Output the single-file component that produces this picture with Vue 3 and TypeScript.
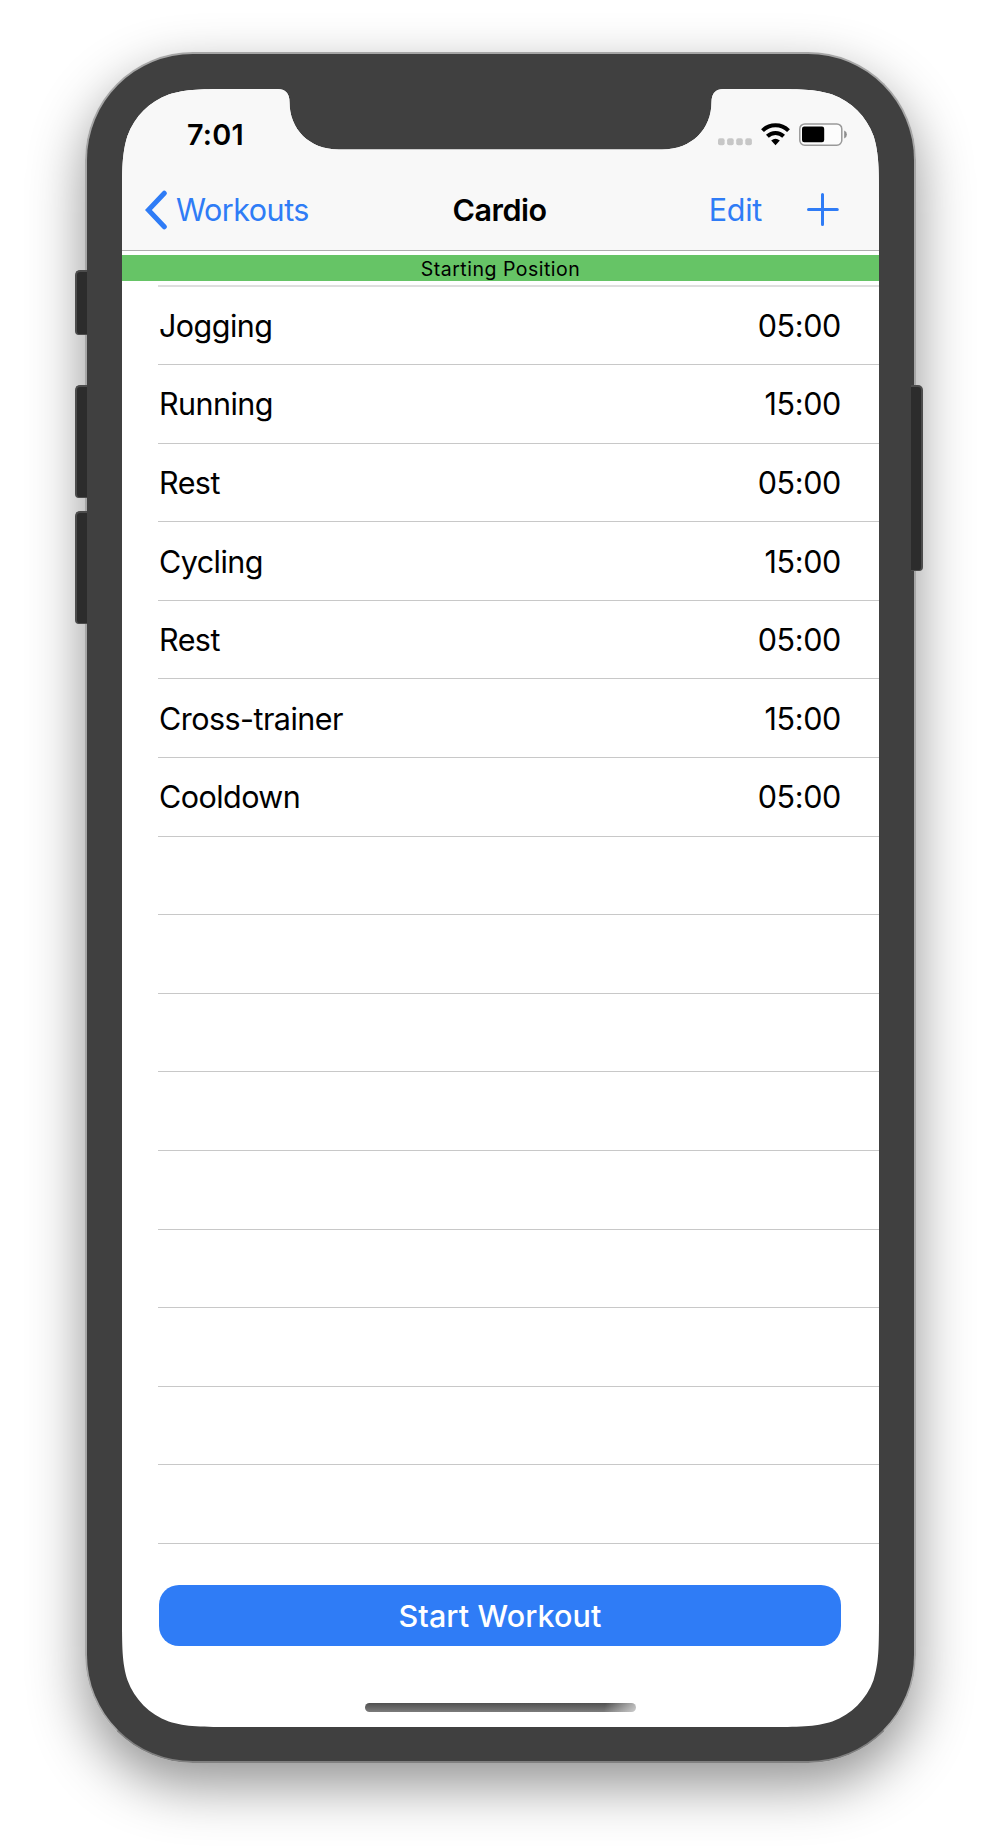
<script setup lang="ts">
interface Exercise {
  name: string
  duration: string
}

const exercises: Exercise[] = [
  { name: 'Jogging', duration: '05:00' },
  { name: 'Running', duration: '15:00' },
  { name: 'Rest', duration: '05:00' },
  { name: 'Cycling', duration: '15:00' },
  { name: 'Rest', duration: '05:00' },
  { name: 'Cross-trainer', duration: '15:00' },
  { name: 'Cooldown', duration: '05:00' },
]

const emptyRows = 9
</script>

<template>
  <main class="stage">
    <div class="phone">
      <i class="key key-mute"></i>
      <i class="key key-up"></i>
      <i class="key key-down"></i>
      <i class="key key-power"></i>
      <div class="body">
        <section class="screen">
          <header class="top">
            <div class="status">
              <span class="clock">7:01</span>
              <div class="indicators">
                <svg class="dots" width="34" height="8" viewBox="0 0 34 8" fill="#c7c7c7">
                  <rect x="0" y="0.3" width="6.6" height="7" rx="2" />
                  <rect x="9.1" y="0.3" width="6.6" height="7" rx="2" />
                  <rect x="18.2" y="0.3" width="6.6" height="7" rx="2" />
                  <rect x="27.3" y="0.3" width="6.6" height="7" rx="2" />
                </svg>
                <svg class="wifi" width="29" height="23" viewBox="0 0 29 23" fill="none" stroke="#000" stroke-width="4">
                  <path d="M1.5 7.6a18.4 18.4 0 0 1 26 0" />
                  <path d="M6.4 13.3a11.6 11.6 0 0 1 16.2 0" />
                  <path d="M14.5 22.2 L10.2 17.6 Q14.5 13.9 18.8 17.6 Z" fill="#000" stroke="none" />
                </svg>
                <svg class="battery" width="49" height="24" viewBox="0 0 49 24">
                  <rect x="0.8" y="0.9" width="42" height="21.3" rx="5" fill="#fcfcfc" stroke="#999" stroke-width="1.5" />
                  <rect x="3" y="3.6" width="22.2" height="15.6" rx="2.2" fill="#000" />
                  <path d="M45.2 7.6q2.7 1 2.7 4t-2.7 4z" fill="#8e8e8e" />
                </svg>
              </div>
            </div>
            <nav class="nav">
              <a class="back">
                <svg width="23" height="40" viewBox="0 0 23 40" fill="none" stroke="#2f7cf6" stroke-width="5" stroke-linecap="round" stroke-linejoin="miter">
                  <path d="M19.3 3.2 L3.4 20 L19.3 36.8" />
                </svg>
                <span>Workouts</span>
              </a>
              <h1>Cardio</h1>
              <div class="actions">
                <a class="edit">Edit</a>
                <svg width="32" height="33" viewBox="0 0 32 33" stroke="#2f7cf6" stroke-width="3" stroke-linecap="round">
                  <path d="M1.5 16.5H30.3M15.5 1.5V31.5" />
                </svg>
              </div>
            </nav>
          </header>
          <div class="banner">Starting Position</div>
          <ul class="list">
            <li v-for="(item, i) in exercises" :key="i">
              <span class="name">{{ item.name }}</span>
              <span class="time">{{ item.duration }}</span>
            </li>
            <li v-for="n in emptyRows" :key="'empty' + n"></li>
          </ul>
          <button class="start" type="button">Start Workout</button>
          <div class="home"></div>
        </section>
      </div>
    </div>
  </main>
</template>

<style>
body {
  background: #fff;
}
</style>

<style scoped>
.stage {
  box-sizing: border-box;
  width: 1000px;
  height: 1848px;
  padding: 52px 0 0 85px;
  overflow: hidden;
  background: #fff;
  font-family: Inter, 'Liberation Sans', sans-serif;
  color: #000;
}

.phone {
  position: relative;
  width: 831px;
  height: 1711px;
  border-radius: 108px;
  box-shadow: 0 22px 55px rgba(0, 0, 0, 0.43);
}

.body {
  box-sizing: border-box;
  height: 100%;
  padding: 35px;
  border: 2px solid #a6a6a6;
  border-bottom-color: #808080;
  border-radius: 108px;
  background: #404040;
}

/* Side keys stick out past the edge of the case. */
.key {
  position: absolute;
  z-index: 1;
  box-sizing: border-box;
  width: 12px;
  background: #2c2c2c;
  border: 2px solid #4c4c4c;
  border-width: 2px 0 1px 2px;
  border-radius: 5px 0 0 4px;
  left: -10px;
}
.key-mute {
  top: 218px;
  height: 65px;
}
.key-up {
  top: 333px;
  height: 113px;
}
.key-down {
  top: 459px;
  height: 113px;
}
.key-power {
  top: 333px;
  left: 826px;
  width: 11.5px;
  height: 186px;
  border-width: 2px 2.5px 1px 0;
  border-radius: 0 5px 4px 0;
}

.screen {
  display: flex;
  flex-direction: column;
  width: 757px;
  height: 1638px;
  background: #fff;
  clip-path: path('M0 113 C0 80.5 0 64.3 5.5 46.7 C12.5 27.6 27.6 12.5 46.7 5.5 C64.3 0 80.5 0 113 0 H155 Q167.5 0 167.5 13 C167.5 40 187 60.5 217 60.5 H540 C570 60.5 589.5 40 589.5 13 Q589.5 0 602 0 H644 C676.5 0 692.7 0 710.3 5.5 C729.4 12.5 744.5 27.6 751.5 46.7 C757 64.3 757 80.5 757 113 V1525 C757 1557.5 757 1573.7 751.5 1591.3 C744.5 1610.4 729.4 1625.5 710.3 1632.5 C692.7 1638 676.5 1638 644 1638 H113 C80.5 1638 64.3 1638 46.7 1632.5 C27.6 1625.5 12.5 1610.4 5.5 1591.3 C0 1573.7 0 1557.5 0 1525 Z');
}

.top {
  box-sizing: border-box;
  flex: none;
  height: 162px;
  border-bottom: 1px solid #adadad;
  background: #f8f8f8;
}

.status {
  display: flex;
  justify-content: space-between;
  height: 80px;
  padding: 0 31px 0 65px;
}
.clock {
  padding-top: 29px;
  font-size: 28.8px;
  font-weight: 600;
  line-height: 34px;
  letter-spacing: 0.2px;
}
.indicators {
  display: flex;
  align-items: flex-start;
  padding-top: 34px;
}
.dots {
  margin: 15px 9px 0 0;
}
.wifi {
  margin: 0 9px 0 0;
}

.nav {
  display: grid;
  grid-template-columns: 1fr auto 1fr;
  align-items: center;
  height: 81px;
  padding: 0 40px 0 23px;
  font-size: 30.5px;
  line-height: 38px;
}
.back,
.actions {
  display: flex;
  align-items: center;
  color: #2f7cf6;
}
.back span {
  margin-left: 8px;
  letter-spacing: -0.5px;
}
.nav h1 {
  margin: 0;
  font-size: 30.5px;
  font-weight: 600;
  letter-spacing: -0.5px;
  transform: translateX(7.5px);
}
.actions {
  justify-content: flex-end;
  gap: 45px;
}
.edit {
  letter-spacing: -0.3px;
}

.banner {
  flex: none;
  height: 26px;
  margin-top: 4px;
  background: #66c466;
  text-align: center;
  font-size: 19.5px;
  line-height: 28px;
  letter-spacing: 0.5px;
}

.list {
  flex: none;
  margin: 3.5px 0 0 36px;
  padding: 0;
  border-top: 2px solid #dedede;
  list-style: none;
}
.list li {
  display: flex;
  align-items: center;
  justify-content: space-between;
  box-sizing: border-box;
  height: 78.6px;
  padding: 0 38px 0 1px;
  border-bottom: 1px solid #c8c8c8;
  font-size: 30.5px;
}
.name {
  letter-spacing: -0.55px;
}
.time {
  letter-spacing: -0.35px;
}

.start {
  flex: none;
  width: 682px;
  height: 61px;
  margin: 40.5px 0 0 37px;
  padding: 0;
  border: 0;
  border-radius: 20px;
  background: #2f7cf6;
  color: #fff;
  font: 500 30.5px/61px Inter, 'Liberation Sans', sans-serif;
  letter-spacing: 0.1px;
}

.home {
  flex: none;
  width: 271px;
  height: 9px;
  margin: 57px auto 0;
  border-radius: 5px;
  background:
    linear-gradient(105deg, transparent 88%, rgba(255, 255, 255, 0.62) 100%),
    linear-gradient(#505050, #7c7c7c);
}
</style>
